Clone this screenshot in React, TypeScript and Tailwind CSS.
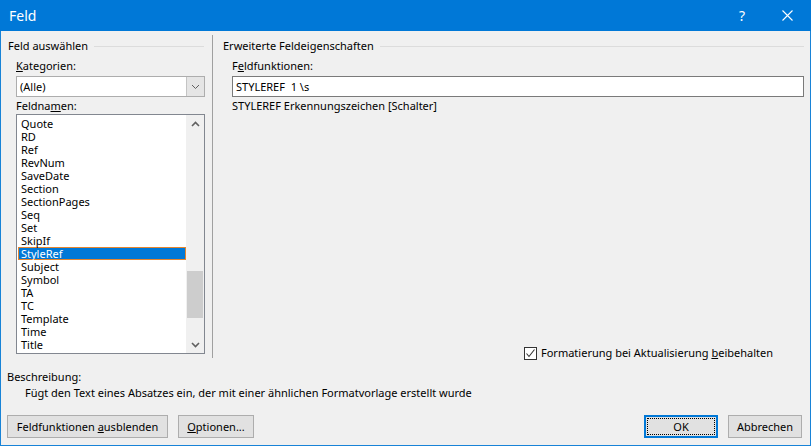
import React from "react";

const fieldNames = [
    "Quote", "RD", "Ref", "RevNum", "SaveDate", "Section", "SectionPages", "Seq", "Set",
    "SkipIf", "StyleRef", "Subject", "Symbol", "TA", "TC", "Template", "Time", "Title"
];

const classValues = {
    "button": "h-[23px] border border-[#adadad] bg-[#e1e1e1] text-black text-[11px] leading-none flex items-center justify-center",
    "label": "h-[16px] leading-[16px] text-[11px] text-black",
    "groupHead": "flex items-center h-[16px] text-[11px] leading-[16px] text-black",
};

const Chevron = ({ dir, thin }: { dir: "up" | "down"; thin?: boolean }) => (
    <svg width="9" height="6" viewBox="0 0 9 6">
        <path
            d={dir === "up" ? "M1 5 L4.5 1.5 L8 5" : "M1 1 L4.5 4.5 L8 1"}
            fill="none"
            stroke="#606060"
            strokeWidth={thin ? "1" : "1.6"}
        />
    </svg>
);

export default function App() {
    return (
        <div
            className="w-[811px] h-[446px] flex flex-col bg-[#f0f0f0] border border-[#1883d7] border-t-0 text-black"
            style={{ fontFamily: '"Noto Sans", sans-serif' }}
        >
            {/*title bar*/}
            <div className="h-[31px] bg-[#0078d7] flex items-center -mx-px pl-[9px] pr-[10px] shrink-0">
                <span className="text-white text-[14px] leading-none">Feld</span>
                <span className="ml-auto text-white text-[14px] leading-none mr-[37px]">?</span>
                <svg width="11" height="11" viewBox="0 0 11 11" className="mr-[8px]">
                    <path d="M0.5 0.5 L10.5 10.5 M10.5 0.5 L0.5 10.5" stroke="white" strokeWidth="1.1" />
                </svg>
            </div>

            {/*main*/}
            <div className="flex h-[330px] shrink-0">
                {/*left group*/}
                <div className="w-[211px] pl-[7px] pr-[7px] pt-[7px] flex flex-col">
                    <div className={classValues.groupHead}>
                        <span>Feld auswählen</span>
                        <div className="flex-1 h-px bg-[#dcdcdc] ml-[6px] mr-[1px]"></div>
                    </div>
                    <div className="pl-[8px] pt-[4px] flex flex-col">
                        <div className={classValues.label}><u>K</u>ategorien:</div>
                        <div className="mt-[2px] h-[21px] w-[189px] border border-[#adadad] bg-white flex">
                            <span className="flex-1 pl-[3px] text-[11px] leading-[19px]">(Alle)</span>
                            <div className="w-[18px] bg-[#e5e5e5] border-l border-[#c4c4c4] flex items-center justify-center">
                                <Chevron dir="down" thin />
                            </div>
                        </div>
                        <div className={`${classValues.label} mt-[1px]`}>Feldna<u>m</u>en:</div>
                        <div className="h-[240px] w-[189px] border border-[#828790] bg-white flex">
                            <div className="flex-1 pt-[2px] pl-[1px]">
                                {fieldNames.map(name => (
                                    <div
                                        key={name}
                                        className={
                                            name === "StyleRef"
                                                ? "h-[13px] leading-[11px] text-[11px] bg-[#0078d7] text-white border border-[#e3852f] pl-[2px]"
                                                : "h-[13px] leading-[13px] text-[11px] pl-[3px]"
                                        }
                                    >
                                        {name}
                                    </div>
                                ))}
                            </div>
                            <div className="w-[18px] bg-[#f0f0f0] flex flex-col items-center">
                                <div className="h-[17px] flex items-center justify-center"><Chevron dir="up" /></div>
                                <div className="flex-1 w-full pt-[139px] pb-[17px]">
                                    <div className="h-[47px] mx-[1px] bg-[#cdcdcd]"></div>
                                </div>
                                <div className="h-[17px] flex items-center justify-center"><Chevron dir="down" /></div>
                            </div>
                        </div>
                    </div>
                </div>

                {/*separator*/}
                <div className="w-px bg-[#a0a0a0] mt-[4px] h-[323px]"></div>

                {/*right group*/}
                <div className="flex-1 pl-[10px] pr-[6px] pt-[7px] flex flex-col">
                    <div className={classValues.groupHead}>
                        <span>Erweiterte Feldeigenschaften</span>
                        <div className="flex-1 h-px bg-[#dcdcdc] ml-[6px]"></div>
                    </div>
                    <div className="pl-[9px] pt-[4px] flex flex-col flex-1">
                        <div className={classValues.label}>F<u>e</u>ldfunktionen:</div>
                        <div className="mt-[2px] h-[21px] w-[572px] border border-[#7a7a7a] bg-white text-[11px] leading-[19px] pl-[3px]">
                            STYLEREF&nbsp; 1 \s
                        </div>
                        <div className={`${classValues.label} mt-[1px]`}>STYLEREF Erkennungszeichen [Schalter]</div>
                        <div className="mt-auto flex items-center ml-[292px] h-[16px]">
                            <div className="w-[13px] h-[13px] border border-[#333333] bg-white flex items-center justify-center">
                                <svg width="11" height="11" viewBox="0 0 11 11">
                                    <path d="M1.5 5.5 L4 8.5 L9.5 1.5" fill="none" stroke="#333333" strokeWidth="1.1" />
                                </svg>
                            </div>
                            <span className="ml-[4px] text-[11px] leading-[16px]">Formatierung bei Aktualisierung <u>b</u>eibehalten</span>
                        </div>
                    </div>
                </div>
            </div>

            {/*description*/}
            <div className="pl-[6px] pt-[8px] flex flex-col">
                <div className={classValues.label}>Beschreibung:</div>
                <div className="text-[11px] leading-[16px] pl-[18px]">
                    Fügt den Text eines Absatzes ein, der mit einer ähnlichen Formatvorlage erstellt wurde
                </div>
            </div>

            {/*footer*/}
            <div className="flex items-center pl-[6px] pr-[8px] mt-[14px]">
                <button className={`${classValues.button} w-[161px]`}>
                    Feldfunktionen&nbsp;<u>a</u>usblenden
                </button>
                <button className={`${classValues.button} w-[76px] ml-[10px]`}>
                    <u>O</u>ptionen...
                </button>
                <button className="ml-auto h-[23px] w-[74px] border-2 border-[#0078d7] bg-[#e1e1e1] p-px">
                    <div className="w-full h-full border border-dotted border-black flex items-center justify-center text-[11px] leading-none">
                        OK
                    </div>
                </button>
                <button className={`${classValues.button} w-[74px] ml-[10px]`}>
                    Abbrechen
                </button>
            </div>
        </div>
    );
}
